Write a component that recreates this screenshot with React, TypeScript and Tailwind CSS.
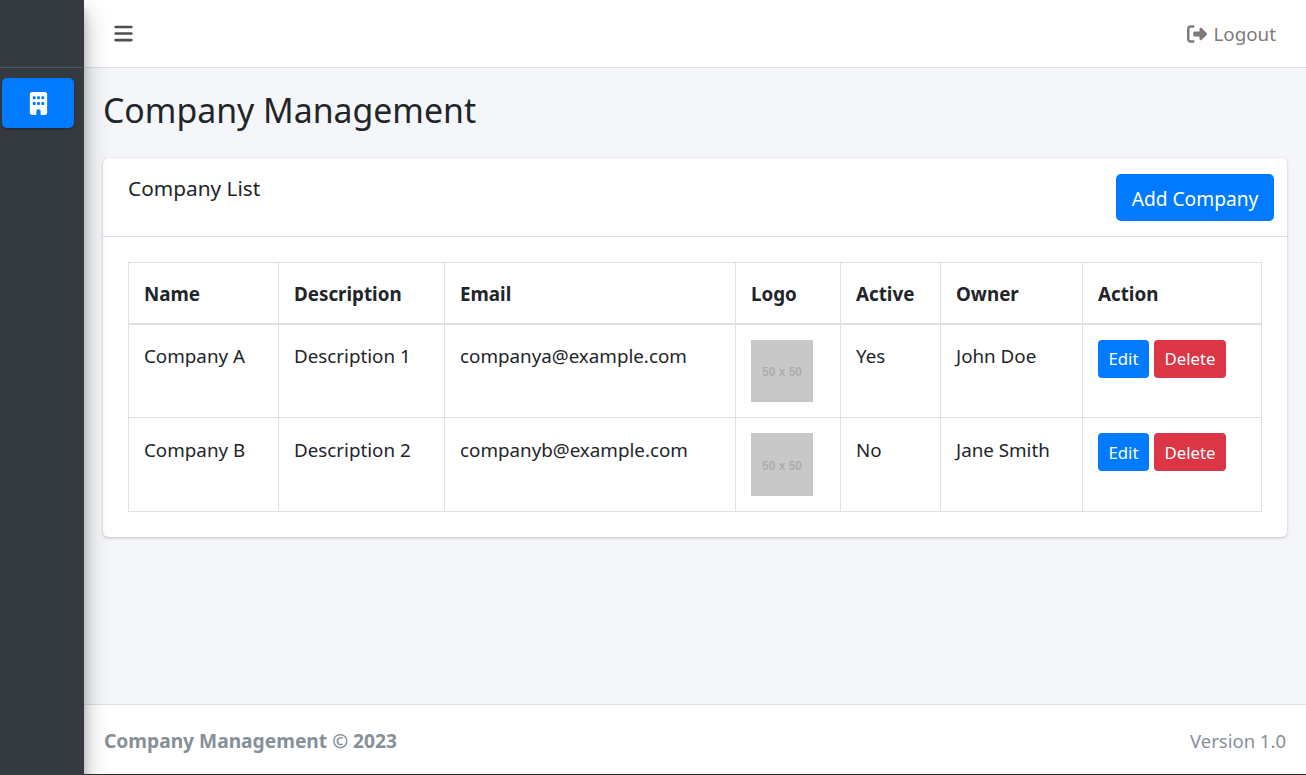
import { FaBars, FaBuilding, FaRightFromBracket } from 'react-icons/fa6';

const companies = [
    { name: 'Company A', description: 'Description 1', email: 'companya@example.com', active: 'Yes', owner: 'John Doe', text: 'pt-[1px]', logoH: 'h-[62px]' },
    { name: 'Company B', description: 'Description 2', email: 'companyb@example.com', active: 'No', owner: 'Jane Smith', text: 'pt-[2px]', logoH: 'h-[63px]' },
];

const headers = [
    { label: 'Name', w: 'w-[150px]' },
    { label: 'Description', w: 'w-[166px]' },
    { label: 'Email', w: 'w-[291px]' },
    { label: 'Logo', w: 'w-[105px]' },
    { label: 'Active', w: 'w-[100px]' },
    { label: 'Owner', w: 'w-[142px]' },
    { label: 'Action', w: 'w-[179px]' },
];

function Placeholder({ height }: { height: string }) {
    return (
        <div className={`${height} w-[62px] bg-[#c8c8c8] flex items-center justify-center pt-[3px] text-[#adadad] text-[12px] font-bold font-['Liberation_Sans',sans-serif]`}>
            50 x 50
        </div>
    );
}

export default function App() {
    const cell = 'border border-[#dee2e6] px-[15px] pt-[15px] pb-0 align-top';
    return (
        <div className="relative flex h-[775px] w-[1306px] overflow-hidden bg-[#f4f6f9] font-['Noto_Sans',sans-serif] text-[18.8px] leading-[30px] text-[#212529]">
            <aside className="relative z-10 w-[84px] shrink-0 bg-[#343a40] shadow-[0_14px_28px_rgba(0,0,0,0.25),0_10px_10px_rgba(0,0,0,0.22)]">
                <div className="h-[68px] border-b border-[#4b545c]" />
                <div className="pl-[2px] pr-[10px] pt-[10px]">
                    <div className="flex h-[50px] items-center justify-center rounded-[5px] bg-[#007bff] text-white shadow-[0_1px_3px_rgba(0,0,0,0.12),0_1px_2px_rgba(0,0,0,0.24)]">
                        <FaBuilding size={23} />
                    </div>
                </div>
            </aside>

            <div className="flex min-w-0 flex-1 flex-col">
                <header className="flex h-[68px] shrink-0 items-center justify-between border-b border-[#dee2e6] bg-white pl-[29px] pr-[30px]">
                    <FaBars size={21} className="text-[#4f4f4f]" />
                    <div className="flex items-center gap-[6px] text-[#7f7a7a]">
                        <FaRightFromBracket size={20} />
                        <span>Logout</span>
                    </div>
                </header>

                <main className="flex-1 pl-[19px] pr-[19px]">
                    <h1 className="pt-[19px] text-[33.8px] leading-[46px] font-normal">Company Management</h1>

                    <section className="mt-[25px] rounded-[5px] bg-white shadow-[0_0_1px_rgba(0,0,0,0.13),0_1px_3px_rgba(0,0,0,0.2)]">
                        <div className="flex h-[79px] justify-between border-b border-[#dee2e6] pl-[25px] pr-[13px]">
                            <div className="pt-[15px] text-[20.8px]">Company List</div>
                            <button className="mt-[16px] h-[47px] w-[158px] rounded-[5px] bg-[#007bff] pt-[2px] text-center text-[19.2px] text-white">Add Company</button>
                        </div>
                        <div className="px-[25px] pt-[25px] pb-[25px]">
                            <table className="w-[1133px] table-fixed border-collapse">
                                <thead>
                                    <tr className="h-[61px]">
                                        {headers.map((h) => (
                                            <th key={h.label} className={`${h.w} border border-b-2 border-[#dee2e6] px-[15px] pt-[2px] text-left align-middle font-bold`}>
                                                {h.label}
                                            </th>
                                        ))}
                                    </tr>
                                </thead>
                                <tbody>
                                    {companies.map((c) => (
                                        <tr key={c.name} className="h-[94px]">
                                            <td className={cell}><div className={c.text}>{c.name}</div></td>
                                            <td className={cell}><div className={c.text}>{c.description}</div></td>
                                            <td className={cell}><div className={c.text}>{c.email}</div></td>
                                            <td className={cell}><Placeholder height={c.logoH} /></td>
                                            <td className={cell}><div className={c.text}>{c.active}</div></td>
                                            <td className={cell}><div className={c.text}>{c.owner}</div></td>
                                            <td className={cell}>
                                                <div className="flex gap-[5px]">
                                                    <button className="h-[38px] w-[51px] rounded-[4px] bg-[#007bff] pt-[1px] text-[16.8px] text-white">Edit</button>
                                                    <button className="h-[38px] w-[72px] rounded-[4px] bg-[#dc3545] pt-[1px] text-[16.8px] text-white">Delete</button>
                                                </div>
                                            </td>
                                        </tr>
                                    ))}
                                </tbody>
                            </table>
                        </div>
                    </section>
                </main>

                <footer className="flex h-[71px] shrink-0 items-center justify-between border-t border-[#dee2e6] bg-white pl-[20px] pr-[20px] pt-[2px] text-[#869099]">
                    <strong className="text-[19.2px] font-bold">Company Management © 2023</strong>
                    <span className="text-[18.5px]">Version 1.0</span>
                </footer>
            </div>
            <div className="absolute bottom-0 left-[84px] right-0 h-[1px] bg-[#2f2f2f]" />
        </div>
    );
}
